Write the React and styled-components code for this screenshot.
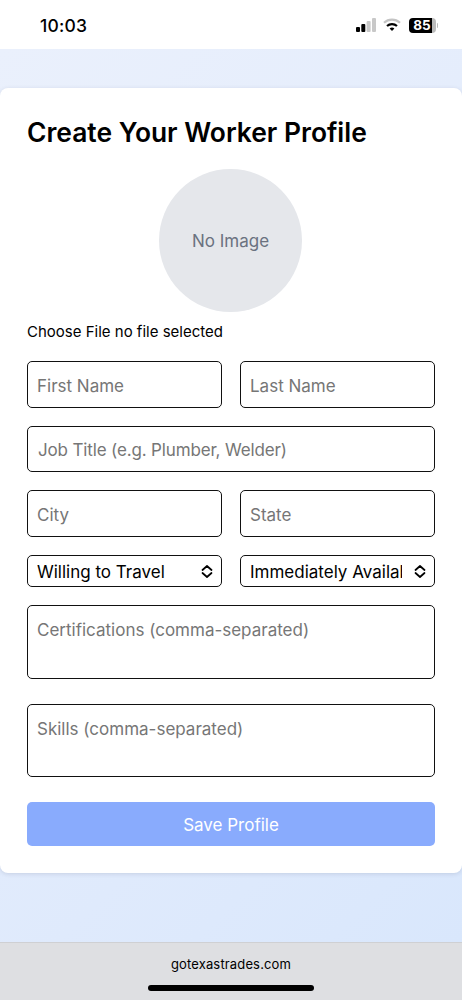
import React from 'react'
import styled, { createGlobalStyle } from 'styled-components'

const GlobalStyle = createGlobalStyle`
  html, body {
    margin: 0;
    padding: 0;
    background: #fff;
  }
  * {
    box-sizing: border-box;
  }
`

const Screen = styled.div`
  width: 462px;
  height: 1000px;
  display: flex;
  flex-direction: column;
  overflow: hidden;
  font-family: Inter, "Liberation Sans", sans-serif;
  color: #000;
`

const StatusBar = styled.div`
  height: 49px;
  flex: none;
  background: #fff;
  display: flex;
  align-items: center;
  justify-content: space-between;
  padding: 1px 24px 0 40px;
`

const Clock = styled.span`
  font-size: 17.5px;
  font-weight: 500;
  letter-spacing: 0.2px;
`

const StatusIcons = styled.div`
  display: flex;
  align-items: center;
  gap: 7.5px;
`

const Battery = styled.div`
  display: flex;
  align-items: center;
  gap: 1px;
`

const BatteryBody = styled.div`
  width: 27px;
  height: 15px;
  border-radius: 4px;
  background: linear-gradient(90deg, #000 85%, #bbb 85%);
  color: #fff;
  font-size: 13.5px;
  font-weight: 700;
  line-height: 15px;
  text-align: center;
`

const BatteryCap = styled.div`
  width: 1.5px;
  height: 5px;
  border-radius: 0 2px 2px 0;
  background: #bbb;
`

const Page = styled.main`
  flex: 1;
  padding-top: 39px;
  background: linear-gradient(135deg, #eaf0fc 0%, #e3ecfc 50%, #d9e7fc 100%);
`

const Card = styled.form`
  height: 785px;
  background: #fff;
  border-radius: 8px;
  box-shadow: 0 1px 4px rgba(60, 70, 100, 0.16);
  padding: 27px 27px 0;
`

const Title = styled.h1`
  margin: 0;
  font-size: 26.4px;
  line-height: 34px;
  font-weight: 600;
  color: #000;
`

const Avatar = styled.div`
  width: 143px;
  height: 143px;
  margin: 20px 0 0 132px;
  border-radius: 50%;
  background: #e5e7eb;
  color: #6b7280;
  font-size: 17px;
  display: flex;
  align-items: center;
  justify-content: center;
`

const FileRow = styled.div`
  margin-top: 11px;
  height: 18px;
  font-size: 15px;
  line-height: 18px;
`

const Row = styled.div`
  display: grid;
  grid-template-columns: 195px 195px;
  column-gap: 18px;
  margin-top: ${(p) => p.$top || 18}px;
`

const fieldText = `
  font-family: Inter, "Liberation Sans", sans-serif;
  font-size: 17px;
  color: #000;
  &::placeholder {
    color: #767676;
    opacity: 1;
  }
`

const Input = styled.input`
  ${fieldText}
  display: block;
  width: 100%;
  height: 47px;
  padding: 2px 9px 0;
  background: #fff;
  border: 1.5px solid #111;
  border-radius: 5px;
  outline: none;
`

const JobInput = styled(Input)`
  grid-column: 1 / -1;
  height: 46px;
  padding: 2px 10px 0;
  letter-spacing: -0.15px;
  &::placeholder {
    letter-spacing: -0.15px;
  }
`

const TextArea = styled.textarea`
  ${fieldText}
  display: block;
  width: 100%;
  height: ${(p) => p.$height}px;
  margin-top: ${(p) => p.$top}px;
  padding: 14px 9px;
  line-height: 21px;
  background: #fff;
  border: 1.5px solid #111;
  border-radius: 5px;
  outline: none;
  resize: none;
`

const SelectWrap = styled.div`
  position: relative;
  height: 32px;
`

const Select = styled.select`
  ${fieldText}
  appearance: none;
  -webkit-appearance: none;
  display: block;
  width: 100%;
  height: 100%;
  padding: 2px 32px 0 9px;
  background: #fff;
  border: 1.5px solid #111;
  border-radius: 5px;
  outline: none;
`

const Chevrons = styled.svg`
  position: absolute;
  right: 9px;
  top: 10px;
  pointer-events: none;
`

const SaveButton = styled.button`
  display: block;
  width: 100%;
  height: 44px;
  margin-top: 25px;
  padding: 2px 0 0;
  border: none;
  border-radius: 5px;
  background: #89abfd;
  color: #fff;
  font-family: Inter, "Liberation Sans", sans-serif;
  font-size: 17px;
`

const BrowserBar = styled.footer`
  height: 58px;
  flex: none;
  background: #dedfe2;
  border-top: 1px solid #cfd0d3;
  display: flex;
  flex-direction: column;
  align-items: center;
  padding-top: 12px;
`

const Url = styled.div`
  font-size: 13px;
  line-height: 18px;
  letter-spacing: 0.15px;
`

const HomeIndicator = styled.div`
  width: 166px;
  height: 6px;
  margin-top: 12px;
  border-radius: 3px;
  background: #000;
`

const SelectField = ({ children }) => (
  <SelectWrap>
    <Select>{children}</Select>
    <Chevrons width="12" height="13" viewBox="0 0 12 13" fill="none" stroke="#000" strokeWidth="1.700" strokeLinecap="round" strokeLinejoin="round">
      <path d="M1.500 5 6 1l4.500 4" />
      <path d="M1.500 8 6 12l4.500-4" />
    </Chevrons>
  </SelectWrap>
)

export default function App() {
  return (
    <Screen>
      <GlobalStyle />
      <StatusBar>
        <Clock>10:03</Clock>
        <StatusIcons>
          <svg width="20" height="14" viewBox="0 0 20 14">
            <rect x="0" y="9" width="4" height="5" rx="1" fill="#000" />
            <rect x="5.300" y="6" width="4" height="8" rx="1" fill="#000" />
            <rect x="10.600" y="3" width="4" height="11" rx="1" fill="#c8c8c8" />
            <rect x="16" y="0" width="4" height="14" rx="1" fill="#c8c8c8" />
          </svg>
          <svg width="18" height="14" viewBox="0 0 18 14" fill="none">
            <path d="M1 4.800C5.500.6 12.500.6 17 4.800" stroke="#c4c4c4" strokeWidth="2.200" />
            <path d="M4 8C6.800 5.500 11.200 5.500 14 8" stroke="#000" strokeWidth="2.200" />
            <path d="M6.600 10.400 9 13l2.400-2.600C10 9.300 8 9.300 6.600 10.400Z" fill="#000" />
          </svg>
          <Battery>
            <BatteryBody>85</BatteryBody>
            <BatteryCap />
          </Battery>
        </StatusIcons>
      </StatusBar>
      <Page>
        <Card>
          <Title>Create Your Worker Profile</Title>
          <Avatar>No Image</Avatar>
          <FileRow>Choose File no file selected</FileRow>
          <Row $top={20}>
            <Input placeholder="First Name" />
            <Input placeholder="Last Name" />
          </Row>
          <Row>
            <JobInput placeholder="Job Title (e.g. Plumber, Welder)" />
          </Row>
          <Row>
            <Input placeholder="City" />
            <Input placeholder="State" />
          </Row>
          <Row>
            <SelectField><option>Willing to Travel</option></SelectField>
            <SelectField><option>Immediately Available</option></SelectField>
          </Row>
          <TextArea $top={18} $height={74} placeholder="Certifications (comma-separated)" />
          <TextArea $top={25} $height={73} placeholder="Skills (comma-separated)" />
          <SaveButton type="button">Save Profile</SaveButton>
        </Card>
      </Page>
      <BrowserBar>
        <Url>gotexastrades.com</Url>
        <HomeIndicator />
      </BrowserBar>
    </Screen>
  )
}
